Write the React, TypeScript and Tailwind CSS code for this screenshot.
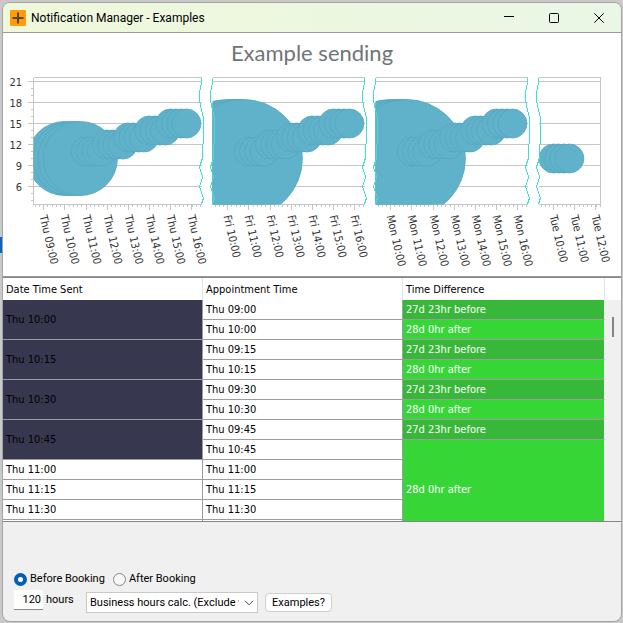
import { useState } from 'react';

const HOUR = 21;
const GRID_VALUES = [6, 9, 12, 15, 18, 21];
const PLOT_TOP = 77.5;
const PLOT_BOTTOM = 204.5;

type Segment = {
  day: string;
  left: number;
  right: number;
  firstHour: number;
  ticks: number[];
  bigRadius?: number;
};

const SEGMENTS: Segment[] = [
  { day: 'Thu', left: 33.5, right: 201.5, firstHour: 9, ticks: [43.5, 64.5, 86.5, 107.5, 128.5, 149.5, 170.5, 191.5], bigRadius: 37 },
  { day: 'Fri', left: 212.5, right: 364.5, firstHour: 10, ticks: [227.5, 248.5, 270.5, 291.5, 312.5, 333.5, 354.5], bigRadius: 59 },
  { day: 'Mon', left: 375.5, right: 527.5, firstHour: 10, ticks: [390.5, 411.5, 433.5, 454.5, 475.5, 496.5, 517.5], bigRadius: 59 },
  { day: 'Tue', left: 538.5, right: 600.5, firstHour: 10, ticks: [553.5, 574.5, 595.5] },
];

// offsets of the torn edge that marks a gap in the time axis
const TEAR = [
  [0, 77.5], [0, 82], [-2, 93], [-2, 100], [0, 110], [2, 118], [2, 131],
  [1, 158], [-2, 167], [1, 177], [-2, 187], [2, 198], [0, 204],
];

const yFor = (value: number) => 123.5 + (15 - value) * 7;
const pad = (n: number) => String(n).padStart(2, '0');

function bubblesFor(s: Segment) {
  const ten = s.ticks[10 - s.firstHour];
  const bubbles: { x: number; y: number; r: number }[] = [];
  const lastHour = s.bigRadius ? 15 : 10;
  for (let hour = 10; hour <= lastHour; hour++) {
    for (let quarter = 0; quarter < 4; quarter++) {
      const r = hour === 10 && s.bigRadius ? s.bigRadius : 14.5;
      bubbles.push({ x: ten + (hour - 10 + quarter / 4) * 21.2, y: yFor(hour), r });
    }
  }
  return bubbles;
}

function tearPath(x: number) {
  return TEAR.map(([dx, y], i) => `${i ? 'L' : 'M'}${x + dx} ${y}`).join(' ');
}

function SendingChart() {
  return (
    <svg viewBox="3 70 618 206" className="block w-full font-['DejaVu_Sans_Condensed','DejaVu_Sans',sans-serif] text-[11px]" role="img" aria-label="Example sending">
      <g stroke="#c6c6c6" shapeRendering="crispEdges">
        <line x1={33.5} x2={33.5} y1={PLOT_TOP} y2={PLOT_BOTTOM} />
        <line x1={600.5} x2={600.5} y1={PLOT_TOP} y2={PLOT_BOTTOM} />
        {GRID_VALUES.map(v => <line key={v} x1={28} x2={33} y1={yFor(v)} y2={yFor(v)} />)}
        {[4, 5, 7, 8, 10, 11, 13, 14, 16, 17, 19, 20].map(v => (
          <line key={v} x1={31} x2={33} y1={yFor(v)} y2={yFor(v)} />
        ))}
      </g>
      {GRID_VALUES.map(v => (
        <text key={v} x={22} y={yFor(v) + 4} textAnchor="end" fill="#333">{v}</text>
      ))}
      {SEGMENTS.map((s, i) => (
        <g key={s.day}>
          <clipPath id={`clip-${s.day}`}>
            <rect x={s.left} y={PLOT_TOP} width={s.right - s.left + 1} height={PLOT_BOTTOM - PLOT_TOP} />
          </clipPath>
          <g stroke="#c6c6c6" shapeRendering="crispEdges">
            {[PLOT_TOP, PLOT_BOTTOM, ...GRID_VALUES.map(yFor)].map(y => (
              <line key={y} x1={s.left} x2={s.right} y1={y} y2={y} />
            ))}
            {s.ticks.map(x => <line key={x} x1={x} x2={x} y1={205} y2={210} />)}
            {Array.from({ length: 50 }, (_, n) => s.ticks[0] + (n - 6) * (HOUR / 5) + n * 0.04)
              .filter(x => x > s.left + 1 && x < s.right)
              .map(x => <line key={x} x1={x} x2={x} y1={205} y2={207} />)}
          </g>
          <g clipPath={`url(#clip-${s.day})`} fill="#60b2cb" stroke="#57a6be" strokeWidth={0.8}>
            {bubblesFor(s).map(b => <circle key={b.x} cx={b.x} cy={b.y} r={b.r} />)}
          </g>
          <g fill="none" stroke="#40e0d0" shapeRendering="crispEdges">
            {i > 0 && <path d={tearPath(s.left)} />}
            {i < SEGMENTS.length - 1 && <path d={tearPath(s.right)} />}
          </g>
          {s.ticks.map((x, n) => (
            <text key={x} transform={`translate(${x - 4} 216) rotate(77)`} fill="#333">
              {s.day} {pad(s.firstHour + n)}:00
            </text>
          ))}
        </g>
      ))}
    </svg>
  );
}

type Row = { sent?: string; sentSpan?: number; appointment: string; diff?: string; diffSpan?: number };

const BEFORE = '27d 23hr before';
const AFTER = '28d 0hr after';

const ROWS: Row[] = [
  { sent: 'Thu 10:00', sentSpan: 2, appointment: 'Thu 09:00', diff: BEFORE },
  { appointment: 'Thu 10:00', diff: AFTER },
  { sent: 'Thu 10:15', sentSpan: 2, appointment: 'Thu 09:15', diff: BEFORE },
  { appointment: 'Thu 10:15', diff: AFTER },
  { sent: 'Thu 10:30', sentSpan: 2, appointment: 'Thu 09:30', diff: BEFORE },
  { appointment: 'Thu 10:30', diff: AFTER },
  { sent: 'Thu 10:45', sentSpan: 2, appointment: 'Thu 09:45', diff: BEFORE },
  { appointment: 'Thu 10:45', diff: AFTER, diffSpan: 5 },
  { sent: 'Thu 11:00', appointment: 'Thu 11:00' },
  { sent: 'Thu 11:15', appointment: 'Thu 11:15' },
  { sent: 'Thu 11:30', appointment: 'Thu 11:30' },
  { sent: '', appointment: '' },
];

function SendingTable() {
  return (
    <div className="flex h-[245px] overflow-hidden border-y border-[#84848c] bg-white font-['DejaVu_Sans_Condensed','DejaVu_Sans',sans-serif]">
      <table className="w-full flex-1 table-fixed border-separate border-spacing-0 self-start text-left text-[11px] leading-4 text-black">
        <colgroup>
          <col className="w-[200px]" />
          <col className="w-[200px]" />
          <col />
        </colgroup>
        <thead>
          <tr className="h-[22px]">
            {['Date Time Sent', 'Appointment Time', 'Time Difference'].map(title => (
              <th key={title} scope="col" className="border-r border-[#e3e3e3] px-[3px] pt-0.5 pb-0 font-normal">{title}</th>
            ))}
          </tr>
        </thead>
        <tbody>
          {ROWS.map((row, i) => (
            <tr key={i} className="h-5">
              {row.sent !== undefined && (
                <td
                  rowSpan={row.sentSpan}
                  className={`border-r border-b border-[#9c9c9f] px-[3px] py-0 ${row.sentSpan ? 'bg-[#383750]' : ''}`}
                >
                  {row.sent}
                </td>
              )}
              <td className="border-r border-b border-[#9c9c9f] px-[3px] py-0">{row.appointment}</td>
              {row.diff && (
                <td
                  rowSpan={row.diffSpan}
                  className={`border-r border-b border-r-[#f0f0f0] border-b-[#9c9c9f] px-[3px] py-0 text-white ${row.diff === BEFORE ? 'bg-[#38b838]' : 'bg-[#37d637]'}`}
                >
                  {row.diff}
                </td>
              )}
            </tr>
          ))}
        </tbody>
      </table>
      <div className="flex w-4 flex-col">
        <div className="h-[22px]" />
        <div className="flex-1 bg-[#f0f0f0] pt-[17px]">
          <div className="mx-auto h-5 w-0.5 bg-[#858585]" />
        </div>
      </div>
    </div>
  );
}

const RADIO = 'size-[13px] appearance-none rounded-full border border-[#868686] bg-[#f6f6f6] checked:border-4 checked:border-[#005fb8] checked:bg-white';

function SettingsBar() {
  const [when, setWhen] = useState('before');
  return (
    <form className="flex flex-1 flex-col justify-end gap-[3px] px-[11px] pb-2 font-[Roboto,sans-serif] text-[11px] leading-4 text-black" onSubmit={e => e.preventDefault()}>
      <div className="flex gap-2">
        <label className="flex items-center gap-[3px]">
          <input type="radio" name="when" className={RADIO} checked={when === 'before'} onChange={() => setWhen('before')} />
          Before Booking
        </label>
        <label className="flex items-center gap-[3px]">
          <input type="radio" name="when" className={RADIO} checked={when === 'after'} onChange={() => setWhen('after')} />
          After Booking
        </label>
      </div>
      <div className="flex items-start">
        <label className="flex w-[70px] items-center gap-[3px]">
          <input type="text" defaultValue="120" className="h-5 w-[29px] border-b border-[#868686] bg-white pr-0.5 text-right" />
          hours
        </label>
        <div className="relative mt-0.5 ml-0.5">
          <select aria-label="Calculation" className="h-[21px] w-[172px] appearance-none border border-[#c8c8c8] bg-white pr-[18px] pl-[3px]">
            <option>Business hours calc. (Exclude weekends)</option>
            <option>Normal hours calc.</option>
          </select>
          <svg viewBox="0 0 10 6" className="pointer-events-none absolute top-2 right-1 h-1.5 w-2.5" fill="none" stroke="#444">
            <path d="M1 .8 5 4.8 9 .8" />
          </svg>
        </div>
        <button type="button" className="mt-[3px] ml-[7px] h-[19px] w-[67px] rounded border border-[#cfcfcf] bg-[#fdfdfd] leading-none">Examples?</button>
      </div>
    </form>
  );
}

function TitleBar() {
  return (
    <header className="flex h-[30px] items-center border-b border-[#9a9a9a] bg-linear-to-r from-[#eff8da] to-[#eaf7e6] pl-[7px] text-black">
      <svg viewBox="0 0 16 16" className="size-4">
        <rect width="16" height="16" rx="1" fill="#ff9c07" />
        <path d="M8 2.5v11M2.5 8h11" stroke="#5c4526" strokeWidth="2" />
      </svg>
      <h1 className="ml-[5px] flex-1 font-[Roboto,sans-serif] text-[12px] leading-4">Notification Manager - Examples</h1>
      <div className="flex">
        <button type="button" aria-label="Minimize" className="flex h-7 w-[45px] items-center justify-center">
          <svg viewBox="0 0 10 10" className="size-2.5"><path d="M0 3.5h10" stroke="#000" /></svg>
        </button>
        <button type="button" aria-label="Maximize" className="flex h-7 w-[45px] items-center justify-center">
          <svg viewBox="0 0 10 10" className="size-2.5"><rect x=".5" y=".5" width="9" height="9" rx="1" fill="none" stroke="#000" /></svg>
        </button>
        <button type="button" aria-label="Close" className="flex h-7 w-[45px] items-center justify-center">
          <svg viewBox="0 0 10 10" className="size-2.5"><path d="M.3.3l9.4 9.4M9.7.3.3 9.7" stroke="#000" /></svg>
        </button>
      </div>
    </header>
  );
}

export default function App() {
  return (
    <div className="flex min-h-screen bg-[#c9c9c9] pr-px pb-px">
      {/* sliver of the window behind */}
      <div className="w-0.5 pt-[237px]">
        <div className="h-4 bg-[#0a64b8]" />
      </div>
      <div className="mt-0.5 flex flex-1 flex-col overflow-hidden rounded-lg border border-[#a5a5a8] bg-[#f0f0f0]">
        <TitleBar />
        <section className="border-b border-[#9a9a9a] bg-white">
          <h2 className="pt-1 pb-px text-center font-[Lato,sans-serif] text-[22px] leading-8 text-[#707477]">Example sending</h2>
          <SendingChart />
        </section>
        <SendingTable />
        <SettingsBar />
      </div>
    </div>
  );
}
